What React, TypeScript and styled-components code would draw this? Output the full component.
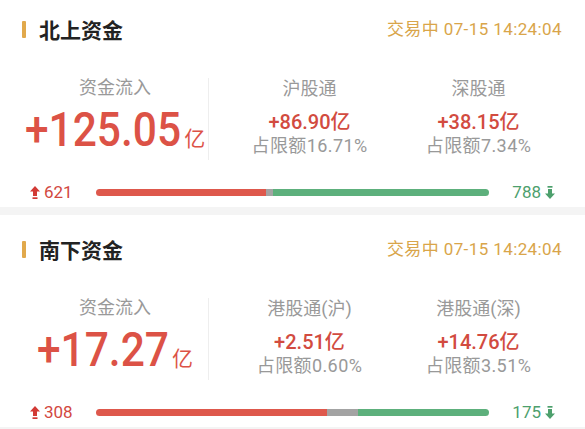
import React from "react";
import styled, { createGlobalStyle } from "styled-components";

const GlobalStyle = createGlobalStyle`
  html, body { margin: 0; padding: 0; background: #fff; }
  body {
    font-family: Roboto, "Noto Sans CJK SC", sans-serif;
    overflow: hidden;
    -webkit-font-smoothing: antialiased;
  }
  * { box-sizing: border-box; }
`;

const NUM_SCALE = 0.885;

const Page = styled.div`
  width: 585px;
  margin-top: -5px;
  display: flex;
  flex-direction: column;
`;

const Section = styled.section`
  height: 212px;
  display: flex;
  flex-direction: column;
  background: #fff;
`;

const Band = styled.div`
  height: 8px;
  flex-shrink: 0;
  background: #f4f4f4;
`;

const Header = styled.div`
  display: flex;
  align-items: center;
  justify-content: space-between;
  padding: 22px 23px 0 22px;
  line-height: 24px;
`;

const TitleWrap = styled.div`
  display: flex;
  align-items: center;
  gap: 13px;
`;

const Mark = styled.span`
  width: 4px;
  height: 17px;
  border-radius: 1px;
  background: #e1a94c;
`;

const Title = styled.h2`
  margin: 0;
  font-family: "Noto Sans CJK SC", sans-serif;
  font-size: 21px;
  font-weight: 600;
  color: #222;
  line-height: 24px;
`;

const Status = styled.span`
  font-family: Roboto, "Noto Sans CJK SC", sans-serif;
  font-size: 17px;
  letter-spacing: 0.4px;
  color: #d9a54a;
`;

const Body = styled.div`
  display: flex;
  height: 82px;
  margin-top: 37px;
  padding: 0 22px;
`;

const MainCol = styled.div`
  width: 186px;
  display: flex;
  flex-direction: column;
  align-items: center;
`;

const Label = styled.div`
  font-family: Roboto, "Noto Sans CJK SC", sans-serif;
  font-size: 18px;
  line-height: 20px;
  color: #999;
`;

const BigValue = styled.div`
  margin-top: 8px;
  display: flex;
  align-items: baseline;
  color: #dc5246;
  line-height: 48px;
`;

const BigNum = styled.span`
  display: inline-block;
  font-family: Roboto, sans-serif;
  font-size: 48px;
  font-weight: 500;
  transform: scaleX(${NUM_SCALE});
  transform-origin: left center;
`;

const BigUnit = styled.span`
  margin-left: 3px;
  font-family: "Noto Sans CJK SC", sans-serif;
  font-size: 21px;
`;

const Divider = styled.div`
  width: 1px;
  background: #eeeeee;
`;

const SubGrid = styled.div`
  flex: 1;
  display: grid;
  grid-template-columns: 1fr 1fr;
  padding-left: 16px;
`;

const SubCol = styled.div`
  display: flex;
  flex-direction: column;
  align-items: center;
  padding-top: 1px;
`;

const SubValue = styled.div`
  margin-top: 11px;
  font-family: Roboto, "Noto Sans CJK SC", sans-serif;
  font-size: 20px;
  font-weight: 500;
  line-height: 24px;
  color: #d24b40;
`;

const Limit = styled.div`
  margin-top: 1px;
  font-family: Roboto, "Noto Sans CJK SC", sans-serif;
  font-size: 18px;
  letter-spacing: 0.4px;
  line-height: 22px;
  color: #999;
`;

const BarRow = styled.div`
  display: flex;
  align-items: center;
  height: 20px;
  margin-top: 22px;
  padding: 0 30px;
`;

const Side = styled.div<{ $end?: boolean }>`
  width: 66px;
  display: flex;
  align-items: center;
  gap: 4px;
  justify-content: ${(p) => (p.$end ? "flex-end" : "flex-start")};
`;

const Count = styled.span<{ $color: string }>`
  font-family: Roboto, sans-serif;
  font-size: 17px;
  line-height: 20px;
  color: ${(p) => p.$color};
`;

const Track = styled.div`
  flex: 1;
  height: 7px;
  border-radius: 4px;
  overflow: hidden;
  display: flex;
`;

const Seg = styled.div<{ $color: string }>`
  height: 100%;
  background: ${(p) => p.$color};
`;

const UpArrow = () => (
  <svg width="10" height="13" viewBox="0 0 10 13">
    <polygon points="5,0 10,5.5 7,5.5 7,10 3,10 3,5.5 0,5.5" fill="#d23a35" />
    <rect x="2.5" y="11.3" width="5" height="1.7" fill="#d23a35" />
  </svg>
);

const DownArrow = () => (
  <svg width="10" height="13" viewBox="0 0 10 13">
    <rect x="2.5" y="0" width="5" height="1.7" fill="#4da06d" />
    <polygon points="3,3 7,3 7,7.5 10,7.5 5,13 0,7.5 3,7.5" fill="#4da06d" />
  </svg>
);

// approximate advance (em) of the number so the scaled span takes its visual width
const advanceEm = (s: string) =>
  [...s].reduce((a, c) => a + (c === "." ? 0.27 : c === "+" ? 0.57 : 0.562), 0);

type Sub = { name: string; value: string; limit: string };
type Flow = {
  title: string;
  status: string;
  total: string;
  subs: Sub[];
  up: number;
  flat: number;
  down: number;
};

const data: Flow[] = [
  {
    title: "北上资金",
    status: "交易中 07-15 14:24:04",
    total: "+125.05",
    subs: [
      { name: "沪股通", value: "+86.90亿", limit: "占限额16.71%" },
      { name: "深股通", value: "+38.15亿", limit: "占限额7.34%" },
    ],
    up: 621,
    flat: 26,
    down: 788,
  },
  {
    title: "南下资金",
    status: "交易中 07-15 14:24:04",
    total: "+17.27",
    subs: [
      { name: "港股通(沪)", value: "+2.51亿", limit: "占限额0.60%" },
      { name: "港股通(深)", value: "+14.76亿", limit: "占限额3.51%" },
    ],
    up: 308,
    flat: 41,
    down: 175,
  },
];

const FlowSection = ({ f }: { f: Flow }) => {
  const sum = f.up + f.flat + f.down;
  return (
    <Section>
      <Header>
        <TitleWrap>
          <Mark />
          <Title>{f.title}</Title>
        </TitleWrap>
        <Status>{f.status}</Status>
      </Header>
      <Body>
        <MainCol>
          <Label>资金流入</Label>
          <BigValue>
            <BigNum style={{ marginRight: `${-(1 - NUM_SCALE) * advanceEm(f.total)}em` }}>
              {f.total}
            </BigNum>
            <BigUnit>亿</BigUnit>
          </BigValue>
        </MainCol>
        <Divider />
        <SubGrid>
          {f.subs.map((s) => (
            <SubCol key={s.name}>
              <Label>{s.name}</Label>
              <SubValue>{s.value}</SubValue>
              <Limit>{s.limit}</Limit>
            </SubCol>
          ))}
        </SubGrid>
      </Body>
      <BarRow>
        <Side>
          <UpArrow />
          <Count $color="#d2483f">{f.up}</Count>
        </Side>
        <Track>
          <Seg $color="#de584c" style={{ width: `${(f.up / sum) * 100}%` }} />
          <Seg $color="#a3a3a3" style={{ width: `${(f.flat / sum) * 100}%` }} />
          <Seg $color="#5db07c" style={{ width: `${(f.down / sum) * 100}%` }} />
        </Track>
        <Side $end>
          <Count $color="#4da06d">{f.down}</Count>
          <DownArrow />
        </Side>
      </BarRow>
    </Section>
  );
};

export default function App() {
  return (
    <>
      <GlobalStyle />
      <Page>
        <FlowSection f={data[0]} />
        <Band />
        <FlowSection f={data[1]} />
        <Band />
      </Page>
    </>
  );
}
